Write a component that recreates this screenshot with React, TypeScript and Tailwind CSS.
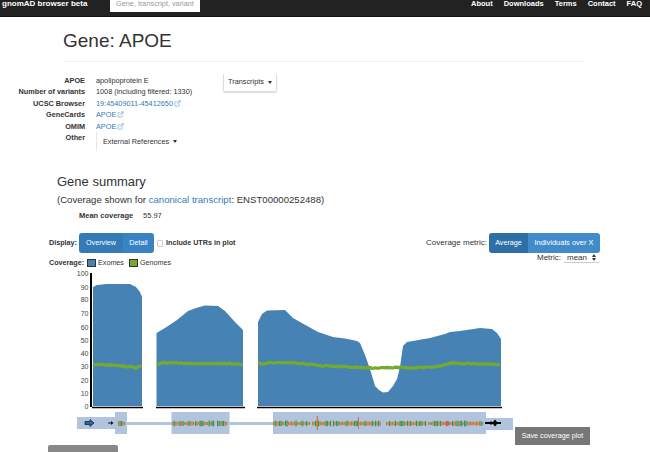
import React from "react";
import { ExternalLink } from "lucide-react";

// coverage outlines, in page coordinates
const exomeAreas = [
  "93,407 93,288 97,286 107,285 130,285 136,288 140,293 142,298 142,407",
  "156.5,407 156.5,334 165,329 177,321 188,312 196,309 205,306.5 218,307 225,312 235,323 243,331 243,407",
  "258,407 258,323 262,315 267,311.5 285,311 293,319 300,323 318,333 333,338 345,339.5 357,342 360,344 365,356 370,370 375,387 379,391 383,393.5 388,393 393,387 397,380 400,368 403,347 407,343 430,339 445,335 450,333 460,332 480,329 492,330 497,334 501,340 501,407",
];

const genomeLines: [number, number][][] = [
  [[93, 365.5], [110, 366], [120, 367], [130, 367.5], [136, 369], [140, 367], [143, 367.5]],
  [[157, 366], [162, 363.5], [175, 364], [200, 365], [215, 364.5], [232, 364.5], [244, 366]],
  [[258, 363.5], [262, 365], [268, 364], [285, 363.5], [300, 364.5], [320, 366.5], [340, 367.5], [360, 368.5], [372, 369], [400, 368.5], [410, 369], [425, 368.5], [440, 367], [450, 364], [465, 364.5], [485, 365], [501, 365.5]],
];

// the genome line is noisy, so break it up into small jittered steps
const jitterLine = (line: [number, number][]) => {
  const pts: string[] = [];
  line.slice(1).forEach(([x2, y2], i) => {
    const [x1, y1] = line[i];
    for (let x = x1; x < x2; x += 1.5) {
      const n = Math.abs(Math.sin(x * 7.13) * 9631.7) % 1;
      pts.push(`${x},${(y1 + ((y2 - y1) * (x - x1)) / (x2 - x1) + (n - 0.5) * 1).toFixed(1)}`);
    }
  });
  return pts.join(" ");
};

const yLabels = [
  ["100", 274],
  ["90", 288],
  ["80", 300],
  ["70", 314],
  ["60", 328],
  ["50", 341],
  ["40", 354],
  ["30", 367],
  ["20", 381],
  ["10", 394],
  ["0", 407],
] as const;

// variant ticks on the transcript track
const makeTicks = (from: number, to: number) => {
  const ticks: { x: number; h: number; color: string }[] = [];
  for (let x = from; x <= to; x += 1.5) {
    const n = Math.abs(Math.sin(x * 12.9898) * 43758.5453) % 1;
    const color = n > 0.62 ? "#3f8f4a" : n > 0.12 ? "#c77a2a" : "#8c8a3a";
    ticks.push({ x, h: 2.5 + n * 3.5, color });
  }
  return ticks;
};

const variantRuns = [
  [118, 125],
  [172, 193],
  [195, 214],
  [217, 226],
  [273, 310],
  [312, 330],
  [333, 380],
  [386, 425],
  [428, 483],
];
const variantTicks = variantRuns.flatMap(([a, b]) => makeTicks(a, b));

const CoverageChart = () => (
  <svg viewBox="75 270 440 167" width={440} height={167} className="shrink-0">
    {exomeAreas.map((points) => (
      <polygon key={points} points={points} fill="#4682b4" />
    ))}
    {genomeLines.map((line) => (
      <polyline key={line[0][0]} points={jitterLine(line)} fill="none" stroke="#73ab2f" strokeWidth={3.2} />
    ))}
    <line x1={91} y1={274} x2={91} y2={408} stroke="#000" strokeWidth={2} />
    {yLabels.map(([label, y]) => (
      <text key={label} x={88.5} y={y + 2.5} textAnchor="end" fontSize={7} fill="#444">
        {label}
      </text>
    ))}
    <line x1={92} y1={408.5} x2={143} y2={408.5} stroke="#000" strokeWidth={1.5} />
    <line x1={156} y1={408.5} x2={245} y2={408.5} stroke="#000" strokeWidth={1.5} />
    <line x1={257} y1={408.5} x2={502} y2={408.5} stroke="#000" strokeWidth={1.5} />

    <rect x={77} y={418} width={38} height={12} fill="#b0c4de" />
    <rect x={115} y={413} width={12} height={22} fill="#b0c4de" />
    <rect x={127} y={423} width={146} height={3} fill="#b0c4de" />
    <rect x={171.5} y={413} width={58} height={22} fill="#b0c4de" />
    <rect x={273} y={413} width={213} height={22} fill="#b0c4de" />
    <rect x={486} y={419} width={27} height={12} fill="#b0c4de" />

    <path d="M85 422.5h5v-2l4 3.5-4 3.5v-2h-5z" fill="#2a6aa8" stroke="#10243c" strokeWidth={0.8} />
    <path d="M108 423.5h3v-1.5l2.5 2-2.5 2v-1.5h-3z" fill="#111" />
    {variantTicks.map((t) => (
      <rect key={t.x} x={t.x} y={424.5 - t.h / 2} width={1.2} height={t.h} fill={t.color} />
    ))}
    <rect x={316.8} y={417} width={1.2} height={14} fill="#c77a2a" />
    <rect x={358} y={418} width={1} height={12} fill="#c77a2a" />
    <circle cx={447.5} cy={424.5} r={2.4} fill="#d9605a" />
    <path d="M485 423h5l1-1 1 1h1l2-2.5 2 2.5h4v2h-4l-2 2.5-2-2.5h-1l-1 1-1-1h-5z" fill="#000" />
  </svg>
);

const Caret = () => (
  <span className="inline-block ml-1 align-middle border-x-[2.5px] border-t-[3px] border-x-transparent border-t-[#333]" />
);

const LinkOut = ({ children }: { children: React.ReactNode }) => (
  <a className="text-[#337ab7] flex items-center gap-[1px]">
    {children}
    <ExternalLink size={7} strokeWidth={1.5} />
  </a>
);

export default function App() {
  return (
    <div className="w-[650px] h-[452px] overflow-hidden bg-white text-[#333] font-['Liberation_Sans',Arial,sans-serif]">
      <nav className="h-[17px] bg-[#222] border-b border-[#111] flex items-start text-white text-[7.5px] font-bold">
        <span className="pl-[2px] w-[110px] text-[8px] leading-[8px] whitespace-nowrap">gnomAD browser beta</span>
        <div className="w-[90px] h-[12px] bg-white text-[#999] font-normal text-[7.3px] leading-[8px] pl-[6px] whitespace-nowrap">
          Gene, transcript, variant
        </div>
        <div className="ml-auto flex gap-[11px] pr-[8px] leading-[8px]">
          <span>About</span>
          <span>Downloads</span>
          <span>Terms</span>
          <span>Contact</span>
          <span>FAQ</span>
        </div>
      </nav>

      <main>
        <div className="ml-[63px] w-[522px] h-[45px] border-b border-[#eee] pt-[13px]">
          <h1 className="text-[19px] leading-[22px]">Gene: APOE</h1>
        </div>

        <div className="flex mt-[13px] h-[88px] text-[7.3px]">
          <div className="grid grid-cols-[85px_auto] gap-x-[11px] auto-rows-[11.4px] w-[223px] leading-[11px]">
            <span className="text-right font-bold">APOE</span>
            <span>apolipoprotein E</span>
            <span className="text-right font-bold">Number of variants</span>
            <span>1008 (including filtered: 1330)</span>
            <span className="text-right font-bold">UCSC Browser</span>
            <LinkOut>19:45409011-45412650</LinkOut>
            <span className="text-right font-bold">GeneCards</span>
            <LinkOut>APOE</LinkOut>
            <span className="text-right font-bold">OMIM</span>
            <LinkOut>APOE</LinkOut>
            <span className="text-right font-bold">Other</span>
            <div className="w-[84px] h-[19px] border-l border-[#e6e6e6] flex items-center pl-[6px] whitespace-nowrap">
              External References
              <Caret />
            </div>
          </div>
          <div className="w-[54px] h-[18px] border border-[#ddd] border-t-0 rounded-b-[2px] shadow-[0_1px_1px_#ddd] flex items-center justify-center -mt-[1px]">
            Transcripts
            <Caret />
          </div>
        </div>

        <div className="ml-[57px] mt-[11px]">
          <h2 className="text-[13px] leading-[15px]">Gene summary</h2>
          <p className="text-[9.6px] leading-[12px] mt-[5px] whitespace-nowrap">
            (Coverage shown for <span className="text-[#337ab7]">canonical transcript</span>: ENST00000252488)
          </p>
          <div className="flex ml-[22px] mt-[5px] text-[7.5px] leading-[10px]">
            <span className="font-bold w-[64px]">Mean coverage</span>
            <span>55.97</span>
          </div>
        </div>

        <div className="flex ml-[49px] w-[551px] mt-[12px] text-[7.2px] font-bold">
          <div className="flex items-start gap-[3px]">
            <span className="w-[27px] leading-[19px]">Display:</span>
            <div className="flex h-[20px] rounded-[3px] overflow-hidden text-white font-normal items-stretch">
              <span className="w-[44px] bg-[#337ab7] flex items-center justify-center">Overview</span>
              <span className="w-[31px] bg-[#3a83c2] flex items-center justify-center">Detail</span>
            </div>
            <span className="w-[6px] h-[7px] mt-[7px] border border-[#ccc] rounded-[1px]" />
            <span className="leading-[19px]">Include UTRs in plot</span>
          </div>
          <div className="ml-auto flex flex-col items-end">
            <div className="flex items-start gap-[2px]">
              <span className="leading-[19px] font-normal text-[8px]">Coverage metric:</span>
              <div className="flex h-[20px] rounded-[3px] overflow-hidden text-white font-normal items-stretch">
                <span className="w-[39px] bg-[#2f6fa8] flex items-center justify-center">Average</span>
                <span className="w-[72px] bg-[#428bca] flex items-center justify-center text-[7.5px]">Individuals over X</span>
              </div>
            </div>
            <div className="flex items-center gap-[2px] -mt-[1px] text-[8px]">
              <span className="font-normal">Metric:</span>
              <div className="w-[37px] h-[10px] border-b border-[#ccc] rounded-[2px] flex items-center justify-between px-[4px] font-normal leading-[9px]">
                mean
                <svg width="4" height="7" viewBox="0 0 4 7">
                  <path d="M2 0l2 3H0zM2 7L0 4h4z" fill="#333" />
                </svg>
              </div>
            </div>
          </div>
        </div>

        <div className="flex items-center ml-[49px] -mt-[6px] h-[10px] text-[7.2px] leading-[8px]">
          <span className="font-bold w-[38px]">Coverage:</span>
          <span className="w-[9px] h-[8px] bg-[#4682b4] border border-[#333]" />
          <span className="ml-[2px] w-[31px]">Exomes</span>
          <span className="w-[9px] h-[8px] bg-[#73ab2f] border border-[#333]" />
          <span className="ml-[2px]">Genomes</span>
        </div>

        <div className="flex h-[176px] ml-[75px] mt-[1px]">
          <CoverageChart />
          <button className="self-end w-[75px] h-[18px] bg-[#777] text-white text-[7.2px]">Save coverage plot</button>
        </div>
        <div className="ml-[48px] w-[70px] h-[8px] bg-[#888] rounded-t-[2px]" />
      </main>
    </div>
  );
}
